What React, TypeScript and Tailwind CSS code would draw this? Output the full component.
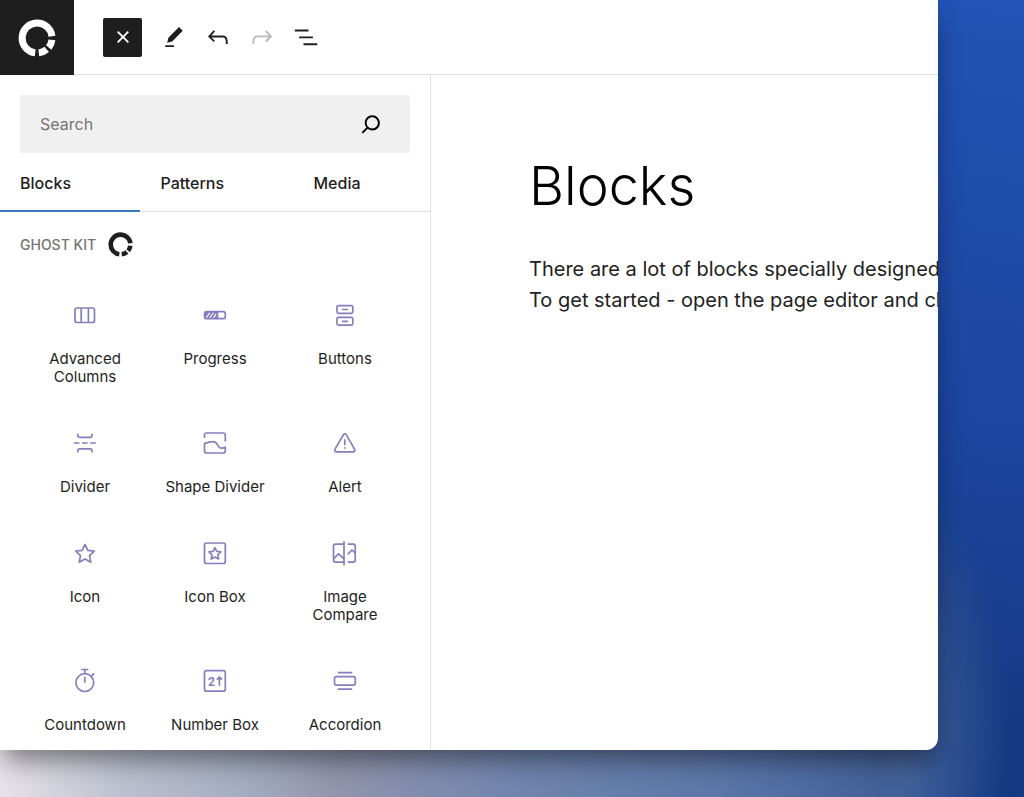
import { useState } from 'react';
import type { ReactNode } from 'react';

const TABS = ['Blocks', 'Patterns', 'Media'];

const STAR = 'M16 7.4l2.8 6 6.5.8-4.8 4.5 1.3 6.5-5.8-3.2-5.8 3.2 1.3-6.5-4.8-4.5 6.5-.8z';

const BLOCKS: { label: string; icon: ReactNode }[] = [
  {
    label: 'Advanced Columns',
    icon: (
      <>
        <rect x="6" y="9" width="19.5" height="14.5" rx="2" />
        <path d="M12.2 9v14.5M19.4 9v14.5" />
      </>
    ),
  },
  {
    label: 'Progress',
    icon: (
      <>
        <rect x="5.5" y="12.7" width="20.8" height="7" rx="2" />
        <path d="M7 12.7h11.5v7H7l-1.5-1.5v-4z" fill="currentColor" stroke="none" />
        <path d="M7.4 18.6l3.4-4.8M11 18.6l3.4-4.8M14.6 18.6l2.6-3.7" stroke="#fff" strokeWidth="1.1" />
        <path d="M18.5 12.7v7" />
      </>
    ),
  },
  {
    label: 'Buttons',
    icon: (
      <>
        <rect x="8" y="6.6" width="15.8" height="7.8" rx="1.6" />
        <rect x="8" y="18.4" width="15.8" height="7.8" rx="1.6" />
        <path d="M13 10.5h6M13 22.3h6" />
      </>
    ),
  },
  {
    label: 'Divider',
    icon: (
      <>
        <path d="M8.8 6.7v2.1a1.6 1.6 0 0 0 1.6 1.6h11a1.6 1.6 0 0 0 1.6-1.6V6.7" />
        <path d="M4.8 16h5.7M13 16h5.7M21.2 16h5.7" />
        <path d="M8.8 25.6v-2.1a1.6 1.6 0 0 1 1.6-1.6h11a1.6 1.6 0 0 1 1.6 1.6v2.1" />
      </>
    ),
  },
  {
    label: 'Shape Divider',
    icon: (
      <>
        <path d="M5.5 11V8a2 2 0 0 1 2-2h16.8a2 2 0 0 1 2 2v6.6" />
        <path d="M5.5 16.6V24a2 2 0 0 0 2 2h16.8a2 2 0 0 0 2-2v-3.8c-2.3.9-4.3 1.6-6 .1-2-1.9-2.6-5.9-6-5.7-3.3.1-5.8.7-8.8 2z" />
      </>
    ),
  },
  {
    label: 'Alert',
    icon: (
      <>
        <path d="M14.4 7.7a1.6 1.6 0 0 1 2.8 0l8.5 14.7a1.6 1.6 0 0 1-1.4 2.4H7.3a1.6 1.6 0 0 1-1.4-2.4z" />
        <path d="M15.8 12.3v5.9M15.8 20.2v1.6" />
      </>
    ),
  },
  { label: 'Icon', icon: <path d={STAR} /> },
  {
    label: 'Icon Box',
    icon: (
      <>
        <rect x="5.5" y="6" width="20.8" height="20.5" rx="2" />
        <path d="M15.9 10.6l1.8 3.8 4.1.5-3 2.9.8 4.2-3.7-2-3.7 2 .8-4.2-3-2.9 4.1-.5z" />
      </>
    ),
  },
  {
    label: 'Image Compare',
    icon: (
      <>
        <path d="M15 4.2v24.4" />
        <path d="M15 7.2H6.5a2 2 0 0 0-2 2v13.9a2 2 0 0 0 2 2H15M18.7 7.2h5.5a2 2 0 0 1 2 2v13.9a2 2 0 0 1-2 2h-5.5" />
        <path d="M4.5 21.8l5-5 5.5 5M18.7 17.4l4.3-4.4 3.2 3" />
      </>
    ),
  },
  {
    label: 'Countdown',
    icon: (
      <>
        <circle cx="15.8" cy="17.6" r="8.9" />
        <path d="M12.2 4.5h7.2M15.8 4.5v4M22.4 11.2l2.8-2.8M15.8 11.8v6" />
      </>
    ),
  },
  {
    label: 'Number Box',
    icon: (
      <>
        <rect x="5.5" y="5.6" width="20.8" height="20.6" rx="2" />
        <text
          x="9"
          y="20.5"
          fill="currentColor"
          stroke="none"
          className="font-['Roboto','Liberation_Sans',sans-serif] text-[12px] font-bold"
        >
          2
        </text>
        <path d="M20.4 20.8v-8.6M17.8 14.6l2.6-2.6 2.6 2.6" />
      </>
    ),
  },
  {
    label: 'Accordion',
    icon: (
      <>
        <path d="M8.8 7.7h14.4M8.8 24.1h14.4" />
        <rect x="5.5" y="11.7" width="20.8" height="8.4" rx="2" />
      </>
    ),
  },
];

function GhostKitLogo({ className }: { className: string }) {
  return (
    <svg viewBox="0 0 38 38" fill="none" stroke="currentColor" strokeWidth="7" className={className} aria-hidden="true">
      <path d="M34 17.2A15 15 0 1 0 17.2 33.9" />
      <path d="M33.9 20.8a15 15 0 0 1-3.2 7.7" />
      <path d="M28.7 30.4a15 15 0 0 1-7.9 3.5" />
    </svg>
  );
}

function Glyph({ d }: { d: string }) {
  return (
    <svg viewBox="0 0 24 24" fill="currentColor" className="size-[30px] shrink-0" aria-hidden="true">
      <path d={d} />
    </svg>
  );
}

function Toolbar() {
  return (
    <header className="flex h-[75px] shrink-0 items-stretch border-b border-[#e0e0e0]">
      <a href="#dashboard" aria-label="Dashboard" className="flex h-[75px] w-[74px] items-center justify-center bg-[#1e1e1e] text-white">
        <GhostKitLogo className="size-[38px]" />
      </a>
      <div className="ml-[29px] flex items-center gap-[14px] text-[#1e1e1e]">
        <button aria-label="Close inserter" className="mr-[3px] flex size-[39px] items-center justify-center rounded-[2px] bg-[#1e1e1e] text-white">
          <Glyph d="M12 13.06l3.712 3.713 1.061-1.06L13.061 12l3.712-3.712-1.06-1.06L12 10.938 8.288 7.227l-1.061 1.06L10.939 12l-3.712 3.712 1.06 1.061L12 13.061z" />
        </button>
        <button aria-label="Tools">
          <Glyph d="m19 7-3-3-8.5 8.5-1 4 4-1L19 7Zm-7 11.5H5V20h7v-1.5Z" />
        </button>
        <button aria-label="Undo">
          <Glyph d="M18.3 11.7c-.6-.6-1.4-.9-2.3-.9H6.7l2.9-3.3-1.1-1-4.5 5L8.5 16l1-1-2.7-2.7H16c.5 0 .9.2 1.3.5 1 1 1 3.4 1 4.5v.3h1.5v-.2c0-1.5 0-4.3-1.5-5.7z" />
        </button>
        <button aria-label="Redo" disabled className="text-[#bbb]">
          <Glyph d="M15.6 6.5l-1.1 1 2.9 3.3H8c-.9 0-1.7.3-2.3.9-1.4 1.5-1.4 4.2-1.4 5.6v.2h1.5v-.3c0-1.1 0-3.5 1-4.5.3-.3.7-.5 1.3-.5h9.2L14.5 15l1.1 1.1 4.6-4.6-4.6-5z" />
        </button>
        <button aria-label="List view">
          <Glyph d="M3 6h11v1.5H3V6Zm3.5 5.5h11V13h-11v-1.5ZM21 17H10v1.5h11V17Z" />
        </button>
      </div>
    </header>
  );
}

function Inserter() {
  const [tab, setTab] = useState('Blocks');
  const [query, setQuery] = useState('');

  const visible = BLOCKS.filter(b => b.label.toLowerCase().includes(query.toLowerCase()));

  return (
    <aside className="w-[431px] shrink-0 overflow-hidden border-r border-[#e0e0e0]">
      <div className="mx-5 mt-5 flex h-[58px] items-center rounded-[2px] bg-[#f0f0f0] pr-6 pl-5">
        <input
          type="text"
          aria-label="Search"
          placeholder="Search"
          value={query}
          onChange={e => setQuery(e.target.value)}
          className="min-w-0 flex-1 bg-transparent text-base outline-none placeholder:text-[#757575]"
        />
        <button aria-label="Submit search" className="text-black">
          <Glyph d="M13 5c-3.3 0-6 2.7-6 6 0 1.4.5 2.7 1.3 3.7l-3.8 3.8 1.1 1.1 3.8-3.8c1 .8 2.3 1.3 3.7 1.3 3.3 0 6-2.7 6-6S16.3 5 13 5zm0 10.5c-2.5 0-4.5-2-4.5-4.5s2-4.5 4.5-4.5 4.5 2 4.5 4.5-2 4.5-4.5 4.5z" />
        </button>
      </div>

      <div role="tablist" className="flex h-[59px] shadow-[inset_0_-1px_0_#dddddd]">
        {TABS.map(t => (
          <button
            key={t}
            role="tab"
            aria-selected={tab === t}
            onClick={() => setTab(t)}
            className={`grow px-5 text-left text-base font-medium text-[#1e1e1e] ${
              tab === t ? 'shadow-[inset_0_-2px_0_#3a78bd]' : ''
            }`}
          >
            {t}
          </button>
        ))}
      </div>

      <div className="flex items-center gap-3 px-5 pt-5 pb-[21px]">
        <h2 className="text-sm font-medium text-[#757575] uppercase">Ghost Kit</h2>
        <GhostKitLogo className="size-[25px] text-[#1e1e1e]" />
      </div>

      <div className="grid grid-cols-3 px-5">
        {visible.map(b => (
          <button key={b.label} className="flex flex-col items-center gap-[19px] px-4 pt-[21px] pb-5">
            <svg
              viewBox="0 0 32 32"
              fill="none"
              stroke="currentColor"
              strokeWidth="1.7"
              strokeLinejoin="round"
              className="size-8 shrink-0 text-[#8580bd]"
              aria-hidden="true"
            >
              {b.icon}
            </svg>
            <span className="-mx-4 max-w-[100px] text-[15px] leading-[18px] text-[#1e1e1e]">{b.label}</span>
          </button>
        ))}
      </div>
    </aside>
  );
}

export default function App() {
  return (
    <div className="h-screen overflow-hidden bg-[linear-gradient(90deg,#e6e2e8_0%,#bcc0cf_12%,#a3acc0_24%,#9194ac_33%,#7085ae_50%,#5b76a8_70%,#46639a_84%,transparent_91%),radial-gradient(ellipse_110px_280px_at_900px_750px,#46639a_0%,#2c5090_50%,transparent_100%),linear-gradient(190deg,#2253b6_0%,#1b459e_45%,#153a84_75%,#102f76_100%)] bg-[length:100%_60px,100%_100%,100%_100%] bg-bottom bg-no-repeat pr-[86px] pb-[47px] font-['Inter','Liberation_Sans',sans-serif]">
      <div className="flex h-full flex-col rounded-br-xl bg-white shadow-[0_14px_26px_-4px_rgba(0,0,0,0.45)]">
        <Toolbar />
        <div className="flex min-h-0 flex-1">
          <Inserter />
          <main className="min-w-0 flex-1 overflow-hidden pt-[76px] pl-[98px] whitespace-nowrap">
            <h1 className="text-[54px] leading-[70px] font-light text-black">Blocks</h1>
            <p className="mt-[33px] text-xl leading-[31px] text-[#222]">
              There are a lot of blocks specially designed
              <br />
              To get started - open the page editor and click
            </p>
          </main>
        </div>
      </div>
    </div>
  );
}
